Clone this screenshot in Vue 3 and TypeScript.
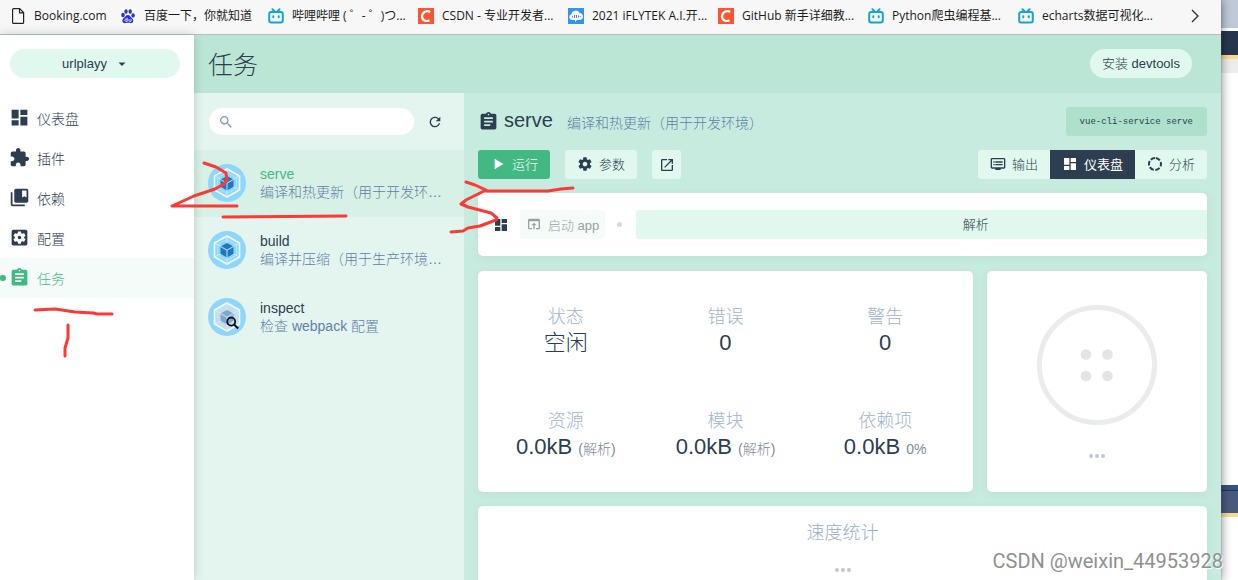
<script setup lang="ts">
import { ref } from 'vue'

type Mark = 'page' | 'paw' | 'tv' | 'csdn' | 'cloud'
interface Bookmark { mark: Mark; label: string }
interface NavItem { icon: string; label: string }
interface Task { name: string; description: string; inspect?: boolean }
interface Stat { label: string; value: string; note?: string }

const icons: Record<string, string> = {
  dashboard: 'M3 13h8V3H3v10zm0 8h8v-6H3v6zm10 0h8V11h-8v10zm0-18v6h8V3h-8z',
  extension: 'M20.5 11H19V7c0-1.1-.9-2-2-2h-4V3.5C13 2.12 11.88 1 10.5 1S8 2.12 8 3.5V5H4c-1.1 0-1.99.9-1.99 2v3.8H3.5c1.49 0 2.7 1.21 2.7 2.7s-1.21 2.7-2.7 2.7H2V20c0 1.1.9 2 2 2h3.8v-1.5c0-1.49 1.21-2.7 2.7-2.7 1.49 0 2.7 1.21 2.7 2.7V22H17c1.1 0 2-.9 2-2v-4h1.5c1.38 0 2.5-1.12 2.5-2.5S21.88 11 20.5 11z',
  bookmarks: 'M4 6H2v14c0 1.1.9 2 2 2h14v-2H4V6zM20 2H8c-1.1 0-2 .9-2 2v12c0 1.1.9 2 2 2h12c1.1 0 2-.9 2-2V4c0-1.1-.9-2-2-2zm0 10l-2.5-1.5L15 12V4h5v8z',
  config: 'M12 10c-1.1 0-2 .9-2 2s.9 2 2 2 2-.9 2-2-.9-2-2-2zm7-7H5c-1.11 0-2 .9-2 2v14c0 1.1.89 2 2 2h14c1.11 0 2-.9 2-2V5c0-1.1-.89-2-2-2zm-1.75 9c0 .23-.02.46-.05.68l1.48 1.16c.13.11.17.3.08.45l-1.4 2.42c-.09.15-.27.21-.43.15l-1.74-.7c-.36.28-.76.51-1.18.69l-.26 1.85c-.03.17-.18.3-.35.3h-2.8c-.17 0-.32-.13-.35-.29l-.26-1.85c-.43-.18-.82-.41-1.18-.69l-1.74.7c-.16.06-.34 0-.43-.15l-1.4-2.42c-.09-.15-.05-.34.08-.45l1.48-1.16c-.03-.23-.05-.46-.05-.69 0-.23.02-.46.05-.68l-1.48-1.16c-.13-.11-.17-.3-.08-.45l1.4-2.42c.09-.15.27-.21.43-.15l1.74.7c.36-.28.76-.51 1.18-.69l.26-1.85c.03-.17.18-.3.35-.3h2.8c.17 0 .32.13.35.29l.26 1.85c.43.18.82.41 1.18.69l1.74-.7c.16-.06.34 0 .43.15l1.4 2.42c.09.15.05.34-.08.45l-1.48 1.16c.03.23.05.46.05.69z',
  assignment: 'M19 3h-4.18C14.4 1.84 13.3 1 12 1c-1.3 0-2.4.84-2.82 2H5c-1.1 0-2 .9-2 2v14c0 1.1.9 2 2 2h14c1.1 0 2-.9 2-2V5c0-1.1-.9-2-2-2zm-7 0c.55 0 1 .45 1 1s-.45 1-1 1-1-.45-1-1 .45-1 1-1zm2 14H7v-2h7v2zm3-4H7v-2h10v2zm0-4H7V7h10v2z',
  search: 'M15.5 14h-.79l-.28-.27C15.41 12.59 16 11.11 16 9.5 16 5.91 13.09 3 9.5 3S3 5.91 3 9.5 5.91 16 9.5 16c1.61 0 3.09-.59 4.23-1.57l.27.28v.79l5 4.99L20.49 19l-4.99-5zm-6 0C7.01 14 5 11.99 5 9.5S7.01 5 9.5 5 14 7.01 14 9.5 11.99 14 9.5 14z',
  refresh: 'M17.65 6.35C16.2 4.9 14.21 4 12 4c-4.42 0-7.99 3.58-7.99 8s3.57 8 7.99 8c3.73 0 6.84-2.55 7.73-6h-2.08c-.82 2.33-3.04 4-5.65 4-3.31 0-6-2.69-6-6s2.69-6 6-6c1.66 0 3.14.69 4.22 1.78L13 11h7V4l-2.35 2.35z',
  play: 'M7 4v16l13-8z',
  settings: 'M19.43 12.98c.04-.32.07-.64.07-.98s-.03-.66-.07-.98l2.11-1.65c.19-.15.24-.42.12-.64l-2-3.46c-.12-.22-.39-.3-.61-.22l-2.49 1c-.52-.4-1.08-.73-1.69-.98l-.38-2.65C14.46 2.18 14.25 2 14 2h-4c-.25 0-.46.18-.49.42l-.38 2.65c-.61.25-1.17.59-1.69.98l-2.49-1c-.23-.09-.49 0-.61.22l-2 3.46c-.13.22-.07.49.12.64l2.11 1.65c-.04.32-.07.65-.07.98s.03.66.07.98l-2.11 1.65c-.19.15-.24.42-.12.64l2 3.46c.12.22.39.3.61.22l2.49-1c.52.4 1.08.73 1.69.98l.38 2.65c.03.24.24.42.49.42h4c.25 0 .46-.18.49-.42l.38-2.65c.61-.25 1.17-.59 1.69-.98l2.49 1c.23.09.49 0 .61-.22l2-3.46c.12-.22.07-.49-.12-.64l-2.11-1.65zM12 15.5c-1.93 0-3.5-1.57-3.5-3.5s1.57-3.5 3.5-3.5 3.5 1.57 3.5 3.5-1.57 3.5-3.5 3.5z',
  open: 'M19 19H5V5h7V3H5c-1.11 0-2 .9-2 2v14c0 1.1.89 2 2 2h14c1.1 0 2-.9 2-2v-7h-2v7zM14 3v2h3.59l-9.83 9.83 1.41 1.41L19 6.41V10h2V3h-7z',
  browser: 'M19 4H5c-1.11 0-2 .9-2 2v12c0 1.1.89 2 2 2h4v-2H5V8h14v10h-4v2h4c1.1 0 2-.9 2-2V6c0-1.1-.89-2-2-2zm-7 6l-4 4h3v6h2v-6h3l-4-4z',
  output: 'M21 3H3c-1.1 0-2 .9-2 2v12c0 1.1.9 2 2 2h5v2h8v-2h5c1.1 0 2-.9 2-2V5c0-1.1-.9-2-2-2zm0 14H3V5h18v12zM5 8h2v2H5zm3 0h11v2H8zM5 12h2v2H5zm3 0h11v2H8z',
}

const bookmarks: Bookmark[] = [
  { mark: 'page', label: 'Booking.com' },
  { mark: 'paw', label: '百度一下，你就知道' },
  { mark: 'tv', label: '哔哩哔哩 ( ゜- ゜)つ...' },
  { mark: 'csdn', label: 'CSDN - 专业开发者...' },
  { mark: 'cloud', label: '2021 iFLYTEK A.I.开...' },
  { mark: 'csdn', label: 'GitHub 新手详细教...' },
  { mark: 'tv', label: 'Python爬虫编程基...' },
  { mark: 'tv', label: 'echarts数据可视化...' },
]
const nav: NavItem[] = [
  { icon: 'dashboard', label: '仪表盘' },
  { icon: 'extension', label: '插件' },
  { icon: 'bookmarks', label: '依赖' },
  { icon: 'config', label: '配置' },
  { icon: 'assignment', label: '任务' },
]
const tasks: Task[] = [
  { name: 'serve', description: '编译和热更新（用于开发环…' },
  { name: 'build', description: '编译并压缩（用于生产环境…' },
  { name: 'inspect', description: '检查 webpack 配置', inspect: true },
]
const stats: Stat[] = [
  { label: '状态', value: '空闲' },
  { label: '错误', value: '0' },
  { label: '警告', value: '0' },
  { label: '资源', value: '0.0kB', note: '(解析)' },
  { label: '模块', value: '0.0kB', note: '(解析)' },
  { label: '依赖项', value: '0.0kB', note: '0%' },
]
const tabs: NavItem[] = [
  { icon: 'output', label: '输出' },
  { icon: 'dashboard', label: '仪表盘' },
  { icon: 'donut', label: '分析' },
]

const activeNav = ref('任务')
const activeTask = ref('serve')
const activeTab = ref('仪表盘')
const query = ref('')
</script>

<template>
  <div class="screen">
    <div class="window">
      <nav class="bookmarks" aria-label="书签栏">
        <div class="marks">
          <a v-for="b in bookmarks" :key="b.label" href="#" class="mark">
            <svg class="favicon" viewBox="0 0 16 16" aria-hidden="true">
              <path v-if="b.mark === 'page'" d="M2.6 1.6q0-1 1-1h6l4 4v9.800q0 1-1 1h-9q-1 0-1-1zM9.500.6v4.200h4.200" fill="#fff" stroke="#222" stroke-width="1.200" />
              <g v-else-if="b.mark === 'paw'" fill="#2932e1">
                <rect width="16" height="16" fill="#fff" />
                <ellipse cx="3" cy="7" rx="1.800" ry="2.200" />
                <ellipse cx="6" cy="3.500" rx="1.700" ry="2.300" />
                <ellipse cx="10.200" cy="3.600" rx="1.700" ry="2.300" />
                <ellipse cx="13.100" cy="7.400" rx="1.700" ry="2.200" />
                <path d="M8 7c2 0 2.500 2 4 3.200 2.400 2 1 5-1 5-1.200 0-1.800-.4-3-.4s-1.900.4-3.200.4c-2.500 0-3.400-3.200-1-5.200C5.500 8.700 6 7 8 7z" />
                <path d="M7.200 9.800v3.600H5.800q-1-.2-1-1.200t1-1.200h1.400M9 11v1.800q0 .6.700.6h1.300V11" fill="none" stroke="#fff" stroke-width=".8" />
              </g>
              <g v-else-if="b.mark === 'tv'" fill="none" stroke="#12a5dc" stroke-width="2" stroke-linecap="round">
                <rect x="1.200" y="4" width="13.600" height="10.500" rx="2" />
                <path d="M4.500 1.200l2 2M11.500 1.200l-2 2M5.300 8.300v1M10.700 8.300v1" />
              </g>
              <g v-else-if="b.mark === 'csdn'">
                <rect width="16" height="16" fill="#fc5531" />
                <path d="M12.200 4C9 2 4.200 3.700 4 8.200c0 4.300 4 5.800 7.500 4" fill="none" stroke="#fff" stroke-width="2.200" />
              </g>
              <g v-else>
                <rect width="16" height="16" fill="#3595ee" />
                <path d="M4 12a3 3 0 0 1-.8-5.800A4.500 4.500 0 0 1 11.600 5a3.500 3.500 0 0 1 1 6.800L9 12l-2 2v-2z" fill="#fff" />
                <path d="M4.500 8v1.500M6.500 7v3M8.500 7v3M10.500 7.500v2M12.300 8v1" stroke="#3595ee" />
              </g>
            </svg>
            <span>{{ b.label }}</span>
          </a>
        </div>
        <button class="more" type="button" aria-label="更多书签">
          <svg viewBox="0 0 16 16"><path d="M5 2l6 6-6 6" fill="none" stroke="#333" stroke-width="1.400" /></svg>
        </button>
      </nav>

      <div class="app">
        <aside class="sidebar">
          <button class="project" type="button">
            <span>urlplayy</span>
            <svg viewBox="0 0 24 24"><path d="M5 9l7 7 7-7z" fill="currentColor" /></svg>
          </button>
          <nav class="menu">
            <a v-for="n in nav" :key="n.label" href="#" :class="['entry', { active: n.label === activeNav }]" @click.prevent="activeNav = n.label">
              <svg viewBox="0 0 24 24"><path :d="icons[n.icon]" fill="currentColor" /></svg>
              <span>{{ n.label }}</span>
            </a>
          </nav>
        </aside>

        <main class="main">
          <header class="top">
            <h1>任务</h1>
            <button class="devtools" type="button">安装 devtools</button>
          </header>

          <div class="body">
            <section class="list">
              <div class="tools">
                <label class="search">
                  <svg viewBox="0 0 24 24"><path :d="icons.search" fill="currentColor" /></svg>
                  <input v-model="query" type="text" aria-label="搜索任务" />
                </label>
                <button class="refresh" type="button" aria-label="刷新">
                  <svg viewBox="0 0 24 24"><path :d="icons.refresh" fill="currentColor" /></svg>
                </button>
              </div>
              <a v-for="t in tasks" :key="t.name" href="#" :class="['task', { active: t.name === activeTask }]" @click.prevent="activeTask = t.name">
                <svg class="pack" viewBox="0 0 38 38" aria-hidden="true">
                  <circle cx="19" cy="19" r="19" fill="#8ed6fb" />
                  <path d="M19 5l12.500 7v14L19 33 6.500 26V12z" :fill="t.inspect ? '#c6dde9' : '#8ed6fb'" stroke="#f0faff" stroke-width="1.600" />
                  <path d="M19 5v8M19 25v8M6.500 12l7 3.500M31.500 12l-7 3.500M6.500 26l7-3.500M31.500 26l-7-3.500" stroke="#d3effd" />
                  <path d="M19 8.500l9.500 5.300v10.400L19 29.500l-9.500-5.300V13.800z" fill="none" stroke="#bde6fb" stroke-width=".8" />
                  <path d="M19 12l6.500 3.600v7.200L19 26.500l-6.500-3.700v-7.200z" :fill="t.inspect ? '#7fa8c9' : '#1c78c0'" />
                  <path d="M12.500 15.600L19 19.200l6.500-3.600M19 19.200v7.300" fill="none" :stroke="t.inspect ? '#c6dde9' : '#a8dcf8'" stroke-width="1.100" />
                  <g v-if="t.inspect" fill="none" stroke="#111">
                    <circle cx="23.200" cy="23.600" r="4" stroke-width="1.800" />
                    <path d="M26 26.500l4.200 4" stroke-width="2.200" />
                  </g>
                </svg>
                <span class="info">
                  <span class="name">{{ t.name }}</span>
                  <span class="desc">{{ t.description }}</span>
                </span>
              </a>
            </section>

            <section class="pane">
              <div class="heading">
                <svg viewBox="0 0 24 24"><path :d="icons.assignment" fill="currentColor" /></svg>
                <h2>serve</h2>
                <p>编译和热更新（用于开发环境）</p>
                <code>vue-cli-service serve</code>
              </div>

              <div class="actions">
                <button class="btn primary" type="button">
                  <svg viewBox="0 0 24 24"><path :d="icons.play" fill="currentColor" /></svg>运行
                </button>
                <button class="btn" type="button">
                  <svg viewBox="0 0 24 24"><path :d="icons.settings" fill="currentColor" /></svg>参数
                </button>
                <button class="btn square" type="button" aria-label="打开">
                  <svg viewBox="0 0 24 24"><path :d="icons.open" fill="currentColor" /></svg>
                </button>
                <div class="tabs">
                  <button v-for="t in tabs" :key="t.label" type="button" :class="['btn', { selected: t.label === activeTab }]" @click="activeTab = t.label">
                    <svg viewBox="0 0 24 24">
                      <circle v-if="t.icon === 'donut'" cx="12" cy="12" r="9" fill="none" stroke="currentColor" stroke-width="3" stroke-dasharray="6.900 2.525" stroke-dashoffset="-1.260" transform="rotate(-90 12 12)" />
                      <path v-else :d="icons[t.icon]" fill="currentColor" />
                    </svg>{{ t.label }}
                  </button>
                </div>
              </div>

              <div class="card plugin">
                <svg class="plugin-icon" viewBox="0 0 24 24"><path :d="icons.dashboard" fill="currentColor" /></svg>
                <button class="btn launch" type="button" disabled>
                  <svg viewBox="0 0 24 24"><path :d="icons.browser" fill="currentColor" /></svg>启动 app
                </button>
                <i class="dot"></i>
                <button class="parse" type="button">解析</button>
              </div>

              <div class="row">
                <div class="card stats">
                  <div v-for="s in stats" :key="s.label" class="stat">
                    <span class="label">{{ s.label }}</span>
                    <span class="value">{{ s.value }} <small v-if="s.note">{{ s.note }}</small></span>
                  </div>
                </div>
                <div class="card progress">
                  <svg class="ring" viewBox="0 0 120 120" aria-hidden="true">
                    <circle cx="60" cy="60" r="57.500" fill="none" stroke="#e9ebed" stroke-width="5" />
                    <g fill="#e4e4e4">
                      <circle cx="49" cy="49.500" r="5.300" /><circle cx="70.500" cy="49.500" r="5.300" />
                      <circle cx="49" cy="71" r="5.300" /><circle cx="70.500" cy="71" r="5.300" />
                    </g>
                  </svg>
                  <span class="ellipsis"><i></i><i></i><i></i></span>
                </div>
              </div>

              <div class="card speed">
                <h3>速度统计</h3>
                <span class="ellipsis"><i></i><i></i><i></i></span>
              </div>
            </section>
          </div>
        </main>
      </div>
    </div>

    <div class="behind" aria-hidden="true">
      <i class="strip steel"></i><i class="strip navy"></i><i class="strip gold"></i><i class="strip pale"></i>
      <i class="strip blank"></i>
      <i class="strip blue"></i><i class="strip slate"></i><i class="strip gold"></i>
    </div>

    <svg class="ink" viewBox="0 0 600 380" aria-hidden="true">
      <path d="M35 310l20-1 20 3 18 1 4 1h15M68 325v13l-3 10v8" />
      <path d="M204 163l12 4 10 6 1 7-3 4-9 5-21 7-22 10h65M223 217l123-1" />
      <path d="M466 182l9 3 11 5-20 10-5 4 7 3 23 6 6 5-1 2-16 6-12 2-5 3-12 1M486 191h62l13-2 12-1" />
    </svg>
    <div class="watermark">CSDN @weixin_44953928</div>
  </div>
</template>

<style>
body {
  margin: 0;
  overflow: hidden;
}
</style>

<style scoped>
* {
  box-sizing: border-box;
}
.screen {
  position: relative;
  display: flex;
  height: 100vh;
  overflow: hidden;
  background: #fff;
  color: #2c3e50;
  font-family: "Liberation Sans", "Noto Sans CJK SC", sans-serif;
  font-size: 14px;
  font-weight: 300;
}
svg {
  display: block;
  flex: none;
}
button {
  border: 0;
  padding: 0;
  color: inherit;
  font: inherit;
  font-size: 13px;
  cursor: pointer;
}
a {
  color: inherit;
  text-decoration: none;
}
h1, h2, h3, p {
  margin: 0;
  font-weight: 300;
}
.window {
  position: relative;
  z-index: 1;
  display: flex;
  flex: 1;
  flex-direction: column;
  min-width: 0;
  box-shadow: 0 0 1px #666, 0 0 10px rgba(0, 0, 0, 0.5);
}
.bookmarks {
  display: flex;
  flex: none;
  align-items: center;
  height: 35px;
  padding: 0 18px 3px 10px;
  border-bottom: 1px solid #b9bdbb;
  background: #f7f7f7;
  color: #1c1c1c;
  font-family: "Open Sans", "Noto Sans CJK SC", sans-serif;
  font-size: 12px;
  font-weight: 400;
}
.marks {
  display: grid;
  flex: 1;
  grid-template-columns: 110px 148px repeat(6, 150px);
  min-width: 0;
  overflow: hidden;
}
.mark {
  display: flex;
  align-items: center;
  gap: 8px;
  line-height: 20px;
  white-space: nowrap;
}
.favicon {
  width: 16px;
  height: 16px;
}
.more {
  background: none;
}
.more svg {
  width: 16px;
  height: 16px;
}
.app {
  display: flex;
  flex: 1;
  min-height: 0;
}
.sidebar {
  position: relative;
  z-index: 1;
  flex: none;
  width: 194px;
  background: #fff;
  box-shadow: 0 0 10px rgba(0, 40, 30, 0.2);
}
.project {
  display: flex;
  align-items: center;
  justify-content: center;
  gap: 9px;
  width: 170px;
  height: 29px;
  margin: 14px 10px 20px;
  border-radius: 15px;
  background: #e0f8ed;
}
.project svg {
  width: 12px;
  height: 12px;
}
.entry {
  position: relative;
  display: flex;
  align-items: center;
  gap: 7px;
  height: 40px;
  padding: 0 0 1px 9px;
}
.entry svg {
  width: 21px;
  height: 21px;
}
.entry.active {
  background: #f5fbf8;
  color: #42b983;
}
.entry.active::before {
  content: "";
  position: absolute;
  left: 0;
  width: 6px;
  height: 6px;
  border-radius: 2px 3px 3px 2px;
  background: #42b983;
}
.main {
  display: flex;
  flex: 1;
  flex-direction: column;
  min-width: 0;
  background: #c8ebdf;
}
.top {
  display: flex;
  flex: none;
  align-items: center;
  justify-content: space-between;
  height: 58px;
  padding: 0 29px 2px 14px;
  background: #bbe6d5;
}
.top h1 {
  font-size: 25px;
}
.devtools {
  height: 29px;
  padding: 0 12px 2px;
  border-radius: 15px;
  background: #e0f8ed;
}
.body {
  display: flex;
  flex: 1;
  min-height: 0;
}
.list {
  flex: none;
  width: 270px;
  background: #e4f5ef;
}
.tools {
  display: flex;
  align-items: center;
  gap: 13px;
  height: 57px;
  padding: 0 21px 0 15px;
}
.search {
  display: flex;
  flex: 1;
  align-items: center;
  min-width: 0;
  height: 27px;
  padding: 0 9px;
  border-radius: 14px;
  background: #fff;
  color: #7b9dad;
}
.search svg {
  width: 16px;
  height: 16px;
}
.search input {
  flex: 1;
  min-width: 0;
  border: 0;
  outline: 0;
  background: none;
  color: #2c3e50;
  font: inherit;
}
.refresh {
  flex: none;
  background: none;
}
.refresh svg {
  width: 16px;
  height: 16px;
}
.task {
  display: flex;
  align-items: center;
  gap: 14px;
  height: 67px;
  padding: 0 17px 2px 14px;
}
.task.active {
  background: #d7f1e6;
}
.pack {
  width: 38px;
  height: 38px;
}
.info {
  display: flex;
  flex: 1;
  flex-direction: column;
  min-width: 0;
  line-height: 18px;
}
.active .name {
  color: #42b983;
}
.desc {
  overflow: hidden;
  color: #5f80a8;
  text-overflow: ellipsis;
  white-space: nowrap;
}
.pane {
  display: flex;
  flex: 1;
  flex-direction: column;
  gap: 14px;
  min-width: 0;
  padding: 14px 14px 0;
  overflow: hidden;
}
.heading {
  display: flex;
  flex: none;
  align-items: center;
  height: 29px;
}
.heading svg {
  width: 21px;
  height: 21px;
}
.heading h2 {
  margin: 0 14px 0 5px;
  padding-bottom: 2px;
  font-size: 20px;
}
.heading p {
  flex: 1;
  color: #5f80a8;
  white-space: nowrap;
}
.heading code {
  height: 29px;
  padding: 0 14px;
  border-radius: 3px;
  background: #ade1cb;
  font-family: "Liberation Mono", monospace;
  font-size: 9px;
  line-height: 31px;
}
.actions {
  display: flex;
  flex: none;
  gap: 15px;
}
.btn {
  display: flex;
  align-items: center;
  justify-content: center;
  gap: 6px;
  height: 29px;
  padding: 0 12px 2px;
  border-radius: 3px;
  background: #e0f8ed;
  white-space: nowrap;
}
.btn svg {
  width: 16px;
  height: 16px;
}
.primary {
  background: #42b983;
  color: #fff;
}
.square {
  width: 29px;
  padding: 0;
}
.tabs {
  display: flex;
  margin-left: auto;
  overflow: hidden;
  border-radius: 3px;
}
.tabs .btn {
  border-radius: 0;
}
.tabs .selected {
  background: #2c3e50;
  color: #fff;
  font-weight: 400;
}
.card {
  border-radius: 5px;
  background: #fff;
  box-shadow: 0 2px 10px rgba(0, 60, 40, 0.06);
}
.plugin {
  display: flex;
  flex: none;
  align-items: center;
  height: 63px;
  margin-bottom: 1px;
  padding-left: 15px;
  overflow: hidden;
}
.plugin-icon {
  width: 16px;
  height: 16px;
}
.launch {
  margin-left: 11px;
  padding: 0 6px 1px;
  background: #f5fbf8;
  color: #9aa0a6;
}
.launch:disabled {
  cursor: default;
}
.dot {
  width: 5px;
  height: 5px;
  margin: 0 14px 0 12px;
  border-radius: 50%;
  background: #d8dbdf;
}
.parse {
  flex: 1;
  height: 29px;
  padding: 0 0 2px 108px;
  border-radius: 3px 0 0 3px;
  background: #e0f8ed;
}
.row {
  display: flex;
  flex: none;
  gap: 14px;
}
.stats {
  display: grid;
  flex: 1;
  grid-template-columns: repeat(3, 1fr);
  min-width: 0;
  padding: 6px 8px 5px;
}
.stat {
  display: flex;
  flex-direction: column;
  justify-content: center;
  height: 105px;
  line-height: 26px;
  text-align: center;
}
.label {
  color: #9fb4cd;
  font-size: 18px;
}
.value {
  font-size: 22px;
  white-space: nowrap;
}
.value small {
  color: #808a95;
  font-size: 14px;
}
.progress {
  display: flex;
  flex: none;
  flex-direction: column;
  align-items: center;
  gap: 29px;
  width: 220px;
  padding-top: 34px;
}
.ring {
  width: 120px;
  height: 120px;
}
.ellipsis {
  display: flex;
  justify-content: center;
  gap: 2px;
}
.ellipsis i {
  width: 4px;
  height: 4px;
  border-radius: 50%;
  background: #c2c7d1;
}
.speed {
  flex: none;
  height: 200px;
  padding-top: 14px;
}
.speed h3 {
  margin-bottom: 21px;
  color: #96afcc;
  font-size: 18px;
  line-height: 27px;
  text-align: center;
}
.behind {
  display: flex;
  flex: none;
  flex-direction: column;
  width: 17px;
}
.steel {
  height: 31px;
  border-bottom: 3px solid #fff;
  background: #bfc9d8;
}
.navy {
  height: 24px;
  background: #28354f;
}
.gold {
  height: 4px;
  background: #fbdc93;
}
.pale {
  height: 14px;
  background: #ededed;
}
.blank {
  height: 412px;
}
.blue {
  height: 6px;
  border-bottom: 1px solid #22365a;
  background: #37527d;
}
.slate {
  height: 22px;
  background: #4a5a7f;
}
.ink {
  position: absolute;
  z-index: 2;
  top: 0;
  left: 0;
  width: 600px;
  height: 380px;
  pointer-events: none;
}
.ink path {
  fill: none;
  stroke: #fb3a36;
  stroke-width: 3;
  stroke-linecap: round;
  stroke-linejoin: round;
}
.watermark {
  position: absolute;
  z-index: 2;
  right: 15px;
  bottom: 6px;
  color: #8d9190;
  font-family: Roboto, "Liberation Sans", sans-serif;
  font-size: 20px;
  font-weight: 400;
  line-height: 26px;
  text-shadow: 1px 1px 1px #fff;
}
</style>
